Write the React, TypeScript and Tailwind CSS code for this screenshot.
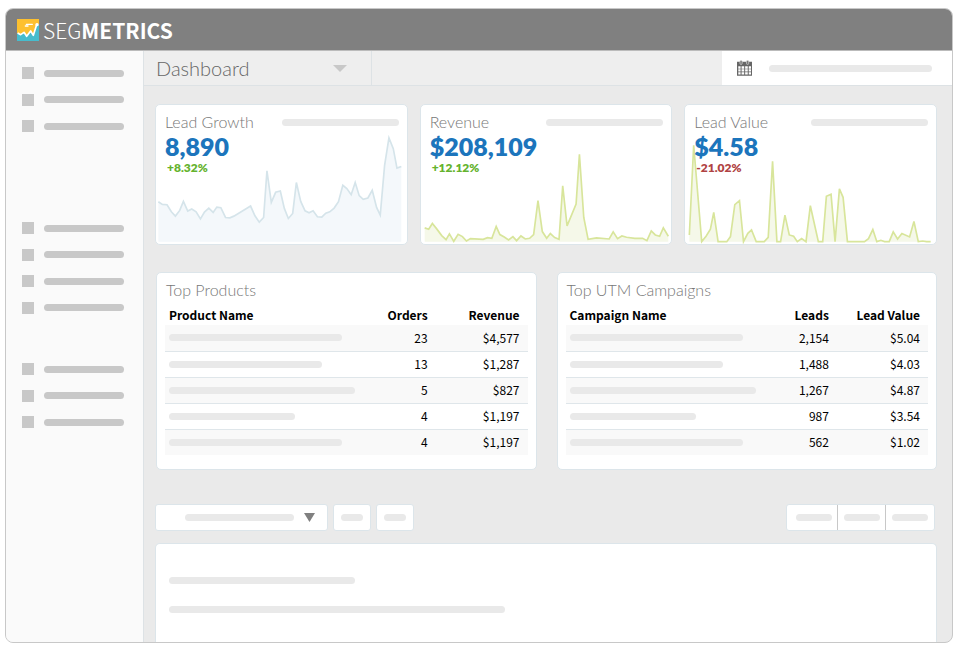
import React from 'react';
import clsx from 'clsx';

interface Stat {
  title: string;
  value: string;
  change: string;
  up: boolean;
  stroke: string;
  fill: string;
  points: string;
}

interface ReportRow {
  bar: string;
  count: string;
  amount: string;
}

const stats: Stat[] = [
  {
    title: 'Lead Growth',
    value: '8,890',
    change: '+8.32%',
    up: true,
    stroke: '#d5e4ea',
    fill: '#f4f8fb',
    points:
      '7,288 19,296 33,297 46,318 58,331 71,314 82,287 95,316 107,310 120,318 133,339 145,319 158,307 171,320 182,304 194,306 208,335 221,336 233,331 283,301 296,330 309,349 322,335 332,196 345,290 358,260 372,256 384,308 396,338 409,323 420,231 433,287 446,315 458,321 470,315 483,333 496,334 508,322 520,318 533,307 546,288 559,239 571,249 584,267 596,231 608,270 620,281 634,277 647,254 660,305 671,328 684,180 697,98 710,130 721,188 734,183',
  },
  {
    title: 'Revenue',
    value: '$208,109',
    change: '+12.12%',
    up: true,
    stroke: '#d8e59b',
    fill: '#f5f8e9',
    points:
      '11,366 23,370 34,353 47,369 62,389 75,401 85,384 98,406 111,385 124,392 136,405 148,398 186,400 199,395 212,397 225,362 236,386 249,393 262,402 275,392 286,404 299,390 312,399 325,397 337,386 350,285 363,377 376,397 387,383 400,395 413,400 424,241 437,360 464,295 474,147 487,335 500,400 525,396 563,399 575,378 588,398 601,390 615,394 640,397 663,397 676,404 689,375 701,387 714,391 725,366 740,391',
  },
  {
    title: 'Lead Value',
    value: '$4.58',
    change: '-21.02%',
    up: false,
    stroke: '#d8e59b',
    fill: '#f5f8e9',
    points:
      '13,387 26,120 50,407 63,391 76,370 86,320 99,407 125,407 136,392 149,297 163,285 175,407 188,382 199,372 213,407 237,407 249,394 262,168 275,407 286,407 299,328 312,387 325,391 336,407 349,398 362,407 375,300 399,407 412,407 423,272 437,266 449,407 462,250 473,275 486,407 537,407 549,398 562,371 574,407 586,403 597,407 611,407 623,378 636,399 649,383 672,393 685,347 698,407 711,405 723,407 735,407',
  },
];

const products: ReportRow[] = [
  { bar: 'w-[173px]', count: '23', amount: '$4,577' },
  { bar: 'w-[153px]', count: '13', amount: '$1,287' },
  { bar: 'w-[186px]', count: '5', amount: '$827' },
  { bar: 'w-[126px]', count: '4', amount: '$1,197' },
  { bar: 'w-[173px]', count: '4', amount: '$1,197' },
];

const campaigns: ReportRow[] = [
  { bar: 'w-[173px]', count: '2,154', amount: '$5.04' },
  { bar: 'w-[153px]', count: '1,488', amount: '$4.03' },
  { bar: 'w-[186px]', count: '1,267', amount: '$4.87' },
  { bar: 'w-[126px]', count: '987', amount: '$3.54' },
  { bar: 'w-[173px]', count: '562', amount: '$1.02' },
];

const Bar: React.FC<{ className?: string }> = ({ className }) => (
  <span className={clsx('block h-[7px] rounded-full bg-[#e9e9e9]', className)} />
);

const Logo: React.FC = () => (
  <svg viewBox="0 0 66 66" className="h-[22px] w-[22px]" aria-hidden="true">
    <path d="M0 0h66v66H0z" fill="#fdc02f" />
    <path d="M0 42l11 5 10-8 8 13 12-16 8 14 11-34h6v50H0z" fill="#47bccd" />
    <path
      d="M2 42l9 5 10-7 8 12 12-16 8 13 10-32"
      fill="none"
      stroke="#fff"
      strokeWidth="5"
      strokeLinejoin="round"
    />
    <path d="M28 16h18M25 21h8" stroke="#fff" strokeWidth="4" strokeLinecap="round" />
    <circle cx="60" cy="17" r="5" fill="#fff" />
  </svg>
);

const CalendarIcon: React.FC = () => (
  <svg viewBox="0 0 46 48" className="h-4 w-[15px]" aria-hidden="true">
    <path d="M0 5h46v43H0z" fill="#666" />
    <path
      d="M4 19h7v7H4zM14 19h8v7h-8zM25 19h8v7h-8zM36 19h7v7h-7zM4 28h7v7H4zM14 28h8v7h-8zM25 28h8v7h-8zM36 28h7v7h-7zM4 37h7v7H4zM14 37h8v7h-8zM25 37h8v7h-8zM36 37h7v7h-7z"
      fill="#fff"
    />
    <rect x="9" y="1" width="7" height="12" rx="3" fill="#777" stroke="#ddd" strokeWidth="2" />
    <rect x="29" y="1" width="7" height="12" rx="3" fill="#777" stroke="#ddd" strokeWidth="2" />
  </svg>
);

const NavGroup: React.FC<{ count: number; className: string }> = ({ count, className }) => (
  <ul className={clsx('flex flex-col justify-between', className)}>
    {Array.from({ length: count }, (_, i) => (
      <li key={i}>
        <a href="#" aria-label={`Section ${i + 1}`} className="flex items-center gap-[10px]">
          <span className="h-3 w-3 bg-[#c8c8c8]" />
          <span className="h-[7px] w-20 rounded-full bg-[#c8c8c8]" />
        </a>
      </li>
    ))}
  </ul>
);

const StatCard: React.FC<{ stat: Stat }> = ({ stat }) => {
  const first = stat.points.split(',')[0];
  const last = stat.points.split(' ').pop()?.split(',')[0];

  return (
    <section className="relative h-[141px] rounded-[5px] border border-[#dce5ea] bg-white px-2 pt-2">
      <svg
        viewBox="0 0 750 414"
        preserveAspectRatio="none"
        className="absolute inset-0 h-full w-full"
        aria-hidden="true"
      >
        <polygon points={`${first},407 ${stat.points} ${last},407`} fill={stat.fill} />
        <polyline points={stat.points} fill="none" stroke={stat.stroke} strokeWidth="5" />
      </svg>
      <div className="relative">
        <div className="flex items-center justify-between">
          <h2 className="pl-px text-base leading-[18px] font-light text-[#777]">{stat.title}</h2>
          <Bar className="w-[117px]" />
        </div>
        <p className="pl-px text-[25px] leading-[30px] font-extrabold text-[#1c75bc]">{stat.value}</p>
        <p
          className={clsx(
            'pl-[3px] text-xs leading-[14px] font-extrabold',
            stat.up ? 'text-[#65b32e]' : 'text-[#b04343]',
          )}
        >
          {stat.change}
        </p>
      </div>
    </section>
  );
};

const ReportCard: React.FC<{ title: string; columns: string[]; rows: ReportRow[] }> = ({
  title,
  columns,
  rows,
}) => (
  <section className="h-[198px] rounded-[5px] border border-[#dce5ea] bg-white px-2 pt-[7px]">
    <h2 className="pl-px text-base leading-5 font-light text-[#777]">{title}</h2>
    <table className="mt-1 w-full font-['Noto_Sans_CJK_SC',sans-serif] text-xs text-black">
      <thead>
        <tr className="h-[21px]">
          <th className="pl-1 text-left font-bold">{columns[0]}</th>
          <th className="w-20 text-right font-bold">{columns[1]}</th>
          <th className="w-[109px] pr-2 text-right font-bold">{columns[2]}</th>
        </tr>
      </thead>
      <tbody>
        {rows.map((row, i) => (
          <tr
            key={i}
            className="h-[26px] border-b border-[#dfe6ea] leading-[18px] last:border-0 odd:bg-[#f9f9f9]"
          >
            <td className="pl-1">
              <Bar className={row.bar} />
            </td>
            <td className="text-right">{row.count}</td>
            <td className="pr-2 text-right">{row.amount}</td>
          </tr>
        ))}
      </tbody>
    </table>
  </section>
);

const App: React.FC = () => (
  <div className="flex h-screen flex-col bg-white pt-2 pr-[7px] pb-[6px] pl-[5px] font-['Lato',sans-serif]">
    <div className="flex min-h-0 flex-1 flex-col overflow-hidden rounded-lg border border-[#c8c8c8] bg-[#eaeaea]">
      <header className="flex h-[42px] shrink-0 items-center gap-1 border-b border-[#bbb] bg-[#808080] px-[11px] text-white">
        <Logo />
        <span className="font-['Noto_Sans_CJK_SC',sans-serif] text-[21px] leading-6 font-extralight">
          SEG<b className="font-bold">METRICS</b>
        </span>
      </header>

      <div className="flex min-h-0 flex-1">
        <nav className="w-[138px] shrink-0 border-r border-[#dde2e5] bg-[#fafafa] pt-4 pl-4">
          <NavGroup count={3} className="h-[65px]" />
          <NavGroup count={4} className="mt-[90px] h-[92px]" />
          <NavGroup count={3} className="mt-[49px] h-[65px]" />
        </nav>

        <main className="flex min-w-0 flex-1 flex-col">
          <div className="flex h-[35px] shrink-0 border-b border-[#dde2e5] bg-[#eee]">
            <button
              type="button"
              className="flex w-[228px] items-center justify-between border-r border-[#dde2e5] pr-6 pl-3 text-xl font-light text-[#666]"
            >
              Dashboard
              <svg viewBox="0 0 14 7" className="h-[7px] w-[14px]" aria-hidden="true">
                <path d="M0 0h14L7 7z" fill="#c8c8c8" />
              </svg>
            </button>
            <button
              type="button"
              aria-label="Date range"
              className="ml-auto flex w-[230px] items-center justify-between bg-white pr-5 pl-[15px]"
            >
              <CalendarIcon />
              <Bar className="w-[163px]" />
            </button>
          </div>

          <div className="flex min-h-0 flex-1 flex-col pt-[18px] pr-[15px] pl-[11px]">
            <div className="grid grid-cols-3 gap-3">
              {stats.map((stat) => (
                <StatCard key={stat.title} stat={stat} />
              ))}
            </div>

            <div className="mt-[27px] grid grid-cols-2 gap-5 pl-px">
              <ReportCard
                title="Top Products"
                columns={['Product Name', 'Orders', 'Revenue']}
                rows={products}
              />
              <ReportCard
                title="Top UTM Campaigns"
                columns={['Campaign Name', 'Leads', 'Lead Value']}
                rows={campaigns}
              />
            </div>

            <div className="mt-[34px] flex h-[27px] shrink-0 gap-[5px]">
              <button
                type="button"
                aria-label="Filter"
                className="flex w-[173px] items-center justify-end gap-[10px] rounded-[3px] border border-[#dce5ea] bg-white pr-3"
              >
                <Bar className="w-[109px]" />
                <svg viewBox="0 0 11 9" className="h-[9px] w-[11px]" aria-hidden="true">
                  <path d="M0 0h11L5.5 9z" fill="#808080" />
                </svg>
              </button>
              {['Columns', 'Export'].map((label) => (
                <button
                  key={label}
                  type="button"
                  aria-label={label}
                  className="flex w-[38px] items-center justify-center rounded-[3px] border border-[#dce5ea] bg-white"
                >
                  <Bar className="w-[22px]" />
                </button>
              ))}
              <div className="mr-0.5 ml-auto flex w-[149px] divide-x divide-[#c8c8c8] overflow-hidden rounded-[3px] border border-[#dce5ea] bg-white">
                {['Day', 'Week', 'Month'].map((label) => (
                  <button
                    key={label}
                    type="button"
                    aria-label={label}
                    className="flex w-12 items-center justify-center first:flex-1 first:justify-end first:pr-[5px]"
                  >
                    <Bar className="w-9" />
                  </button>
                ))}
              </div>
            </div>

            <section className="mt-3 flex-1 rounded-t-[5px] border border-b-0 border-[#dce5ea] bg-white px-[13px] pt-[33px]">
              <Bar className="w-[186px]" />
              <Bar className="mt-[22px] w-[336px]" />
            </section>
          </div>
        </main>
      </div>
    </div>
  </div>
);

export default App;
